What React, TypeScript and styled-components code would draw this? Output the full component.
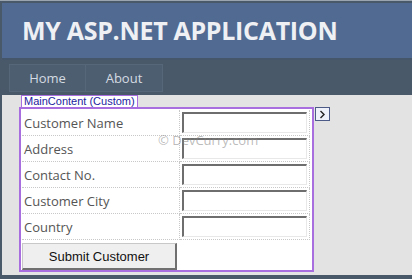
import { Fragment } from 'react';
import styled, { createGlobalStyle } from 'styled-components';

const GlobalStyle = createGlobalStyle`
  html, body {
    margin: 0;
    padding: 0;
    background: #4a596a;
  }
  * {
    box-sizing: border-box;
  }
`;

const fields = ['Customer Name', 'Address', 'Contact No.', 'Customer City', 'Country'];

const Page = styled.div`
  width: 412px;
  height: 279px;
  border-top: 1px solid #9aa4b0;
  padding: 2px 0 0 2px;
  background: #4a596a;
  overflow: hidden;
`;

const Header = styled.header`
  height: 57px;
  background: #506a92;
  border-bottom: 2px solid #46566a;
  padding: 9px 0 0 20px;
`;

const Title = styled.h1`
  margin: 0;
  font-family: 'Open Sans', 'DejaVu Sans', sans-serif;
  font-weight: 700;
  font-size: 25px;
  line-height: 36px;
  letter-spacing: -0.3px;
  color: #eef0f4;
`;

const Nav = styled.nav`
  height: 35px;
  background: #4a596a;
  padding: 4px 0 0 7px;
  display: flex;
`;

const NavItem = styled.a`
  width: 77px;
  height: 28px;
  background: #4d5e70;
  border: 1px solid #56677a;
  display: flex;
  align-items: center;
  justify-content: center;
  font-family: 'Open Sans', 'DejaVu Sans', sans-serif;
  font-size: 13px;
  color: #d4dbe2;
  & + & {
    border-left: none;
  }
`;

const Content = styled.main`
  position: relative;
  height: 180px;
  background: #e3e3e3;
  padding: 0 0 0 17px;
`;

const TabLabel = styled.div`
  width: fit-content;
  margin-left: 2px;
  height: 12px;
  padding: 0 2px;
  background: #fff;
  border: 1px solid #a86ee0;
  border-bottom: none;
  font-family: 'Liberation Sans', Arial, sans-serif;
  font-size: 11px;
  line-height: 11px;
  color: #1c1ca0;
`;

const FrameRow = styled.div`
  display: flex;
  align-items: flex-start;
`;

const Frame = styled.div`
  width: 295px;
  height: 165px;
  background: #fff;
  border: 2px solid #a86ee0;
  padding: 1px 2px 0 1px;
`;

const SmartTag = styled.div`
  width: 15px;
  height: 14px;
  margin-left: 1px;
  background: #eef0fa;
  border: 1px solid #4c5a88;
  display: flex;
  align-items: center;
  justify-content: center;
`;

const FormGrid = styled.div`
  display: grid;
  grid-template-columns: 158px 130px;
  grid-auto-rows: 26px;
`;

const Cell = styled.div`
  border-bottom: 1px dotted #c8c8c8;
  border-right: 1px dotted #c8c8c8;
  display: flex;
  align-items: center;
`;

const Label = styled(Cell)`
  padding-left: 2px;
  font-family: 'Open Sans', 'DejaVu Sans', sans-serif;
  font-size: 13px;
  color: #555;
`;

const InputCell = styled(Cell)`
  padding-left: 2px;
`;

const TextInput = styled.input`
  width: 125px;
  height: 21px;
  border-style: solid;
  border-width: 2px 1px 1px 2px;
  border-color: #6e6e6e #e8e8e8 #e8e8e8 #6e6e6e;
  background: #fff;
  outline: none;
`;

const ButtonRow = styled.div`
  padding-top: 3px;
`;

const SubmitButton = styled.button`
  width: 155px;
  height: 27px;
  background: #efefef;
  border-style: solid;
  border-width: 1px 2px 2px 1px;
  border-color: #c8c8c8 #707070 #707070 #c8c8c8;
  font-family: 'Liberation Sans', Arial, sans-serif;
  font-size: 13px;
  color: #111;
  padding: 0;
`;

const Watermark = styled.div`
  position: absolute;
  left: 156px;
  top: 36px;
  font-family: 'Open Sans', 'DejaVu Sans', sans-serif;
  font-size: 13px;
  color: rgba(130, 130, 130, 0.55);
  pointer-events: none;
`;

const BottomBar = styled.div`
  height: 4px;
  background: #4a596a;
`;

export default function App() {
  return (
    <>
      <GlobalStyle />
      <Page>
        <Header>
          <Title>MY ASP.NET APPLICATION</Title>
        </Header>
        <Nav>
          <NavItem>Home</NavItem>
          <NavItem>About</NavItem>
        </Nav>
        <Content>
          <TabLabel>MainContent (Custom)</TabLabel>
          <FrameRow>
            <Frame>
              <FormGrid>
                {fields.map((f) => (
                  <Fragment key={f}>
                    <Label>{f}</Label>
                    <InputCell>
                      <TextInput />
                    </InputCell>
                  </Fragment>
                ))}
              </FormGrid>
              <ButtonRow>
                <SubmitButton>Submit Customer</SubmitButton>
              </ButtonRow>
            </Frame>
            <SmartTag>
              <svg width="7" height="9" viewBox="0 0 7 9">
                <path d="M1.5 1 L5 4.5 L1.5 8" fill="none" stroke="#222" strokeWidth="1.4" />
              </svg>
            </SmartTag>
          </FrameRow>
          <Watermark>© DevCurry.com</Watermark>
        </Content>
        <BottomBar />
      </Page>
    </>
  );
}
